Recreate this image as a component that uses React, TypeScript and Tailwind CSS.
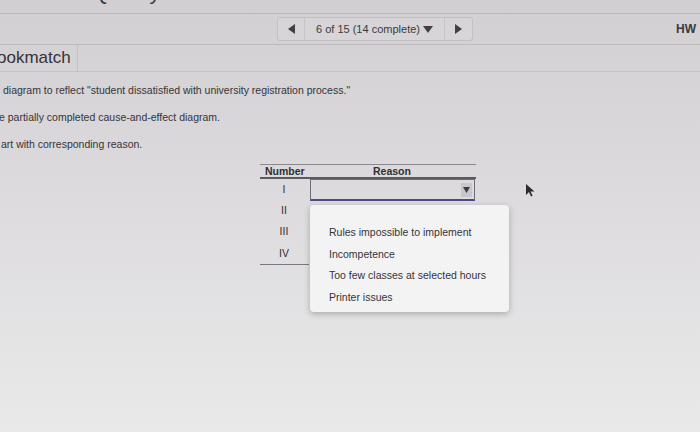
import React from 'react';

const rows = ['I', 'II', 'III', 'IV'];
const options = [
  'Rules impossible to implement',
  'Incompetence',
  'Too few classes at selected hours',
  'Printer issues',
];

const App: React.FC = () => {
  return (
    <div
      className="relative w-[700px] h-[432px] overflow-hidden bg-linear-to-b from-[#d2cfd2] via-[#dedcde] to-[#e9e9ea] text-[#2f2f33]"
      style={{ fontFamily: '"Liberation Sans", Arial, sans-serif' }}
    >
      {/* cut off chapter title */}
      <div className="h-[14px] overflow-hidden border-b border-[#b9b6b9]">
        <div className="ml-[92px] -mt-[20px] text-[22px] leading-[24px] text-[#3a3a3e]">Quality and SW</div>
      </div>

      {/* question nav */}
      <div className="h-[31px] flex items-center border-b border-[#bdbabd]">
        <div className="ml-[277px] h-[24px] w-[196px] flex items-stretch rounded-[3px] border border-[#c3c0c3] bg-[#d9d7d9]/60">
          <div className="w-[27px] flex items-center justify-center border-r border-[#c8c5c8]">
            <svg width="7" height="10" viewBox="0 0 7 10"><path d="M7 0L0 5l7 5z" fill="#404044" /></svg>
          </div>
          <div className="flex-1 flex items-center justify-center gap-[3px] text-[11px] text-[#3b3b40]">
            <span>6 of 15 (14 complete)</span>
            <svg width="10" height="7" viewBox="0 0 10 7"><path d="M0 0h10L5 7z" fill="#404044" /></svg>
          </div>
          <div className="w-[28px] flex items-center justify-center border-l border-[#c8c5c8]">
            <svg width="7" height="10" viewBox="0 0 7 10"><path d="M0 0l7 5-7 5z" fill="#404044" /></svg>
          </div>
        </div>
        <div className="ml-auto mr-[4px] text-[12px] font-bold text-[#3a3a3e]">HW</div>
      </div>

      {/* title */}
      <div className="h-[27px] flex border-b border-[#c4c2c4]">
        <div className="w-[78px] border-r border-[#c4c2c4] flex items-center overflow-hidden">
          <span className="-ml-[3px] text-[17px] text-[#333338]">ookmatch</span>
        </div>
      </div>

      {/* instructions */}
      <div className="pl-[3px] text-[10.5px] text-[#34343a]">
        <p className="mt-[12px] leading-[12px]">diagram to reflect "student dissatisfied with university registration process."</p>
        <p className="mt-[15px] -ml-[4px] leading-[12px]">e partially completed cause-and-effect diagram.</p>
        <p className="mt-[15px] -ml-[2px] leading-[12px]">art with corresponding reason.</p>
      </div>

      {/* table */}
      <div className="ml-[260px] mt-[14px] w-[216px]">
        <div className="flex h-[15px] border-t border-[#8a888c] border-b-2 border-b-[#5b5a60] text-[10.5px] font-bold leading-[13px]">
          <div className="w-[50px] pl-[5px]">Number</div>
          <div className="flex-1 pl-[63px]">Reason</div>
        </div>
        {rows.map((r, i) => (
          <div key={r} className="flex h-[21.3px] text-[10.5px]">
            <div className="w-[50px] flex items-center justify-center pr-[2px]">{r}</div>
            <div className="flex-1 flex items-center">
              {i === 0 && (
                <div className="w-[165px] h-[22px] mt-[1px] border border-[#6e6c78] border-b-2 border-b-[#4d4a8a] flex justify-end items-center pr-[2px]">
                  <div className="w-[11px] h-[14px] bg-[#c9c7cc] flex items-center justify-center">
                    <svg width="7" height="6" viewBox="0 0 7 6"><path d="M0 0h7L3.5 6z" fill="#3c3c44" /></svg>
                  </div>
                </div>
              )}
            </div>
          </div>
        ))}
        <div className="w-[49px] border-t border-[#7a787c]" />
      </div>

      {/* open dropdown */}
      <div className="absolute left-[310px] top-[205px] w-[199px] h-[107px] rounded-[4px] bg-[#f3f3f3] shadow-[0_2px_6px_rgba(0,0,0,0.25)] pt-[20px] pl-[19px] text-[10.5px] text-[#34343a]">
        {options.map((o) => (
          <div key={o} className="h-[21.5px] leading-[14px]">{o}</div>
        ))}
      </div>

      {/* mouse pointer */}
      <svg className="absolute left-[526px] top-[184px]" width="9" height="13" viewBox="0 0 9 13">
        <path d="M0 0v11l3-3 2 4.5 1.6-.7-2-4.3H8.5z" fill="#2c2c30" />
      </svg>
    </div>
  );
};

export default App;
